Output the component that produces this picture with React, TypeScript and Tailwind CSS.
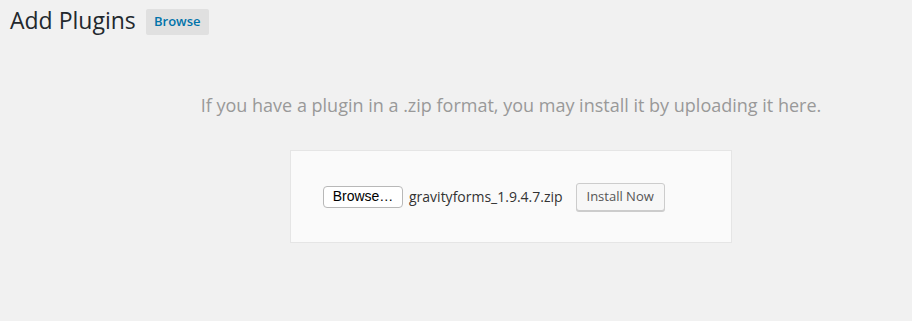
import React from 'react';

const App: React.FC = () => {
  return (
    <div className="min-h-[321px] w-[912px] bg-[#f1f1f1] font-['Open_Sans',sans-serif] overflow-hidden">
      <div className="flex items-center pl-[10px] pt-[6px]">
        <h1 className="text-[23px] leading-[29px] font-normal text-[#23282d]">Add Plugins</h1>
        <span className="ml-[10px] mt-[2px] flex h-[26px] w-[63px] items-center justify-center rounded-[2px] bg-[#e0e0e0] text-[13px] font-semibold text-[#0073aa]">
          Browse
        </span>
      </div>

      <div className="w-[1022px] pt-[58px] flex flex-col items-center">
        <p className="text-[18px] leading-[24px] text-[#999999]">
          If you have a plugin in a .zip format, you may install it by uploading it here.
        </p>
        <div className="mt-[33px] flex h-[93px] w-[442px] items-center border border-[#e5e5e5] bg-[#fafafa] pl-[32px]">
          <span className="flex h-[22px] w-[80px] items-center justify-center rounded-[4px] border border-[#b8b8b8] bg-white font-['Liberation_Sans',sans-serif] text-[14px] text-black">
            Browse…
          </span>
          <span className="ml-[6px] text-[14px] text-[#333]">gravityforms_1.9.4.7.zip</span>
          <span className="ml-[13px] flex h-[28px] w-[89px] items-center justify-center rounded-[3px] border border-[#cccccc] bg-[#f7f7f7] text-[13px] text-[#555] shadow-[0_1px_0_#ccc]">
            Install Now
          </span>
        </div>
      </div>
    </div>
  );
};

export default App;
